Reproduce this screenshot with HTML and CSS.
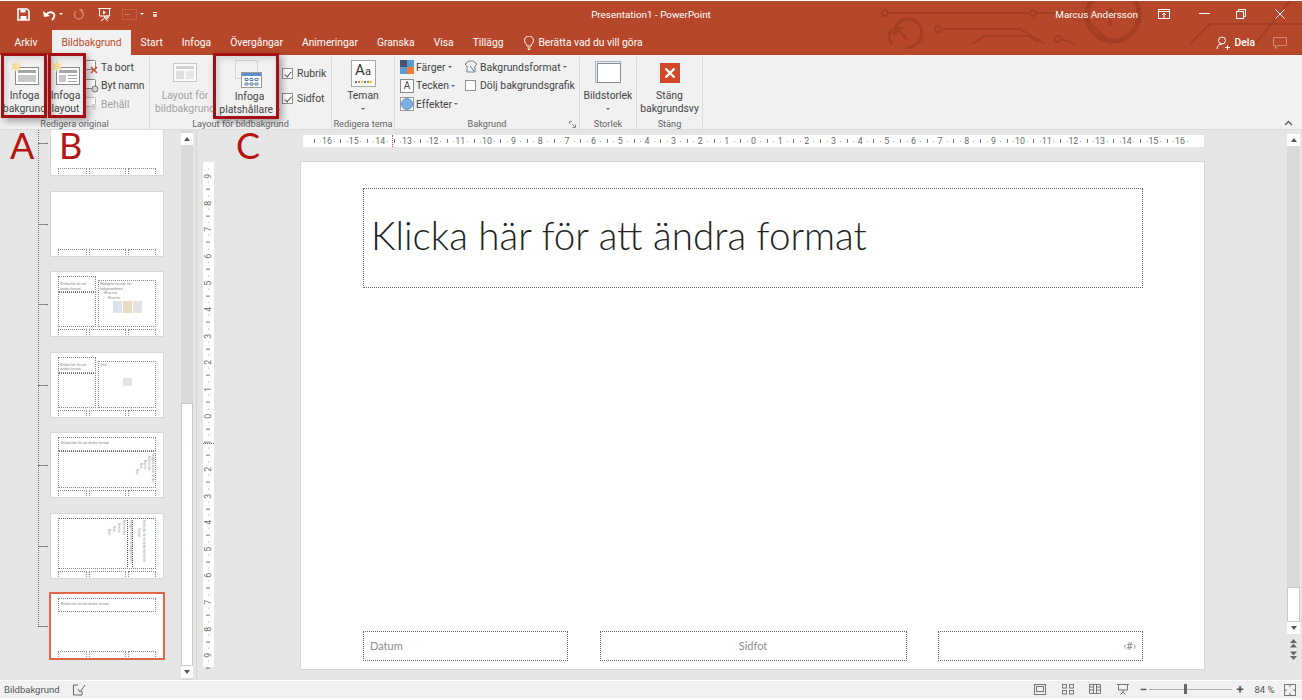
FILE: index.html
```html
<!DOCTYPE html>
<html lang="sv">
<head>
  <meta charset="UTF-8">
  <title>Presentation1 - PowerPoint</title>
  <link rel="stylesheet" href="styles.css">
</head>
<body>
  <div class="chrome">
    <svg class="circuit" width="422" height="54" viewBox="0 0 422 54" fill="none" stroke="#a33d24" stroke-width="2">
      <circle cx="5" cy="12" r="3"/><path d="M8 12H150"/><circle cx="153" cy="12" r="3"/><path d="M156 12H200L232 43"/>
      <circle cx="233" cy="14" r="26" stroke-width="5"/><path d="M222 17l8-9 8 9M230 9v16" stroke-width="3"/>
      <path d="M14 34a14 14 0 1 1 12 12M12 43a14 14 0 0 1-1-15" stroke-width="3"/><path d="M16 27h7M16 27v7M16 27l11 11" stroke-width="3"/>
      <circle cx="58" cy="28" r="3"/><path d="M61 28H140L165 43"/>
      <path d="M92 43L105 35H148L158 41"/><circle cx="178" cy="38" r="3"/><path d="M181 38L195 43"/>
      <path d="M310 43L330 23H422M375 43L410 0"/>
    </svg>

    <!-- Title bar -->
    <header class="titlebar">
      <div class="qat">
        <svg width="13" height="13" viewBox="0 0 13 13"><path d="M1 1h9l2 2v9H1z" fill="none" stroke="#fff" stroke-width="1.6"/><rect x="3.5" y="1.5" width="5" height="3" fill="#fff"/><rect x="3.5" y="8" width="6" height="4" fill="#fff"/></svg>
        <svg class="qat-undo" width="14" height="13" viewBox="0 0 14 13"><path d="M4 8c1-4 6-5 8-2 1 2 0 4-2 6" fill="none" stroke="#fff" stroke-width="1.8"/><path d="M1 3l1 6 6-1z" fill="#fff"/></svg>
        <span class="caret caret-white qat-caret"></span>
        <svg class="qat-redo" width="12" height="13" viewBox="0 0 12 13"><path d="M8 2.500a4.500 4.500 0 1 1-5 .5" fill="none" stroke="#d2836e" stroke-width="1.500"/><path d="M6 1l4 0-1 4z" fill="#d2836e"/></svg>
        <svg class="qat-show" width="15" height="15" viewBox="0 0 15 15" fill="none" stroke="#fff"><path d="M1 1.500h13M2.500 2v7h10V2M7.500 9v2M4 14l3.500-3 3.500 3"/><path d="M6 3.500l3 2-3 2z" fill="#fff" stroke="none"/><circle cx="10" cy="10" r="2" fill="#f0cdc3" stroke="none"/></svg>
        <svg class="qat-touch" width="15" height="11" viewBox="0 0 15 11" fill="none" stroke="#cd7a63"><rect x="0.500" y="0.500" width="14" height="10" stroke-dasharray="1 1"/><path d="M3 5.500h5"/></svg>
        <span class="caret caret-white qat-caret"></span>
        <span class="qat-more"></span>
      </div>
      <div class="doc-title">Presentation1 - PowerPoint</div>
      <div class="window-controls">
        <span class="user-name">Marcus Andersson</span>
        <svg class="ctl-display" width="12" height="10" viewBox="0 0 12 10" fill="none" stroke="#fff"><rect x="0.500" y="0.500" width="11" height="9"/><path d="M0 2.500h12"/><path d="M6 9V4M4 6l2-2 2 2"/></svg>
        <svg class="ctl-min" width="11" height="2" viewBox="0 0 11 2"><rect width="11" height="1" fill="#fff"/></svg>
        <svg class="ctl-restore" width="10" height="10" viewBox="0 0 10 10" fill="none" stroke="#fff"><rect x="0.500" y="2.500" width="7" height="7"/><path d="M2.500 2V0.500h7v7H8"/></svg>
        <svg class="ctl-close" width="10" height="10" viewBox="0 0 10 10" stroke="#fff"><path d="M0.500 0.500l9 9M9.500 0.500l-9 9"/></svg>
      </div>
    </header>

    <!-- Tabs -->
    <nav class="tabs">
      <span class="tab tab-file">Arkiv</span>
      <span class="tab tab-active">Bildbakgrund</span>
      <span class="tab">Start</span>
      <span class="tab">Infoga</span>
      <span class="tab">Övergångar</span>
      <span class="tab">Animeringar</span>
      <span class="tab">Granska</span>
      <span class="tab">Visa</span>
      <span class="tab">Tillägg</span>
      <span class="tab tab-tell">
        <svg width="10" height="14" viewBox="0 0 10 14" fill="none" stroke="#fff"><path d="M3 10c0-2-2.500-3-2.500-5.500a4.500 4.500 0 0 1 9 0C9.500 7 7 8 7 10z"/><path d="M3.500 12h3M4 13.500h2"/></svg>
        Berätta vad du vill göra
      </span>
      <span class="share">
        <svg width="14" height="14" viewBox="0 0 14 14" fill="none" stroke="#fff"><circle cx="6" cy="4.500" r="3.500"/><path d="M1 13c0-3 2-5 5-5M9 11.500h5M11.500 9v5"/></svg>
        Dela
        <svg class="share-comment" width="14" height="12" viewBox="0 0 14 12" fill="none" stroke="#d08a76"><path d="M0.500 0.500h13v8h-9l-2 3v-3h-2z"/></svg>
      </span>
    </nav>
  </div>

  <!-- Ribbon -->
  <section class="ribbon">
    <div class="group group-master">
      <div class="group-body">
        <div class="big-btn btn-bg">
          <svg class="big-icon" width="30" height="26" viewBox="0 0 30 26"><rect x="5.500" y="7.500" width="23" height="17" fill="#fff" stroke="#8a8a8a"/><rect x="8" y="10" width="18" height="3" fill="#a6a6a6"/><rect x="8" y="15" width="18" height="7" fill="#c8c8c8"/><path d="M6 0l1.500 4 4-1-2.500 3.500 2.500 3.500-4-1L6 12 4.500 9l-4 1L3 6.500 .5 3l4 1z" fill="#f6dd9c"/></svg>
          <span>Infoga<br>bakgrund</span>
        </div>
        <div class="big-btn btn-layout">
          <svg class="big-icon" width="30" height="26" viewBox="0 0 30 26"><rect x="5.500" y="7.500" width="23" height="17" fill="#fff" stroke="#8a8a8a"/><rect x="8" y="10" width="18" height="3" fill="#a6a6a6"/><rect x="8" y="15" width="7" height="7" fill="#c8c8c8"/><path d="M17 15.500h9M17 18.500h9M17 21.500h9" stroke="#a6a6a6"/><path d="M6 0l1.500 4 4-1-2.500 3.500 2.500 3.500-4-1L6 12 4.500 9l-4 1L3 6.500 .5 3l4 1z" fill="#f6dd9c"/></svg>
          <span>Infoga<br>layout</span>
        </div>
        <div class="small-col">
          <div class="small-btn"><svg width="14" height="14" viewBox="0 0 14 14"><rect x="0.500" y="0.500" width="10" height="9" rx="1" fill="#fff" stroke="#8a8a8a"/><path d="M6 7l6 6M12 7l-6 6" stroke="#d24726" stroke-width="1.500"/></svg>Ta bort</div>
          <div class="small-btn"><svg width="14" height="14" viewBox="0 0 14 14"><rect x="0.500" y="0.500" width="10" height="9" rx="1" fill="#fff" stroke="#8a8a8a"/><circle cx="10" cy="10" r="3" fill="#d8d8d8" stroke="#777"/></svg>Byt namn</div>
          <div class="small-btn is-disabled"><svg width="14" height="14" viewBox="0 0 14 14"><rect x="0.500" y="0.500" width="10" height="9" rx="1" fill="#fff" stroke="#c0c0c0"/><path d="M7 7h4v6l-2-1-2 1z" fill="#d5d5d5"/></svg>Behåll</div>
        </div>
      </div>
      <div class="group-label">Redigera original</div>
    </div>

    <div class="group group-layout">
      <div class="group-body">
        <div class="big-btn btn-lay-disabled is-disabled">
          <svg class="big-icon" width="24" height="19" viewBox="0 0 24 19"><rect x="0.500" y="0.500" width="23" height="18" fill="#fafafa" stroke="#c6c6c6"/><rect x="3" y="3" width="18" height="3" fill="#d4d4d4"/><rect x="3" y="8" width="8" height="8" fill="#dedede"/><rect x="13" y="8" width="8" height="8" fill="#e6e6e6"/></svg>
          <span>Layout för<br>bildbakgrund</span>
        </div>
        <div class="big-btn btn-place">
          <svg class="big-icon" width="30" height="30" viewBox="0 0 30 30" fill="none"><rect x="0.500" y="0.500" width="22" height="18" stroke="#b5b5b5" stroke-dasharray="1 1"/><rect x="6.500" y="12.500" width="20" height="15" fill="#fff" stroke="#9b9b9b"/><rect x="7" y="13" width="19" height="3" fill="#5b8fd0"/><path d="M10 18.500h3v2h-3zM15 18.500h3v2h-3zM20 18.500h3v2h-3zM10 23h3v2h-3zM15 23h3v2h-3zM20 23h3v2h-3z" stroke="#5b7fae"/></svg>
          <span>Infoga<br>platshållare <i class="caret"></i></span>
        </div>
        <div class="check-col">
          <label class="check-row"><i class="checkbox is-checked"></i>Rubrik</label>
          <label class="check-row"><i class="checkbox is-checked"></i>Sidfot</label>
        </div>
      </div>
      <div class="group-label">Layout för bildbakgrund</div>
    </div>

    <div class="group group-theme">
      <div class="group-body">
        <div class="big-btn btn-theme">
          <div class="theme-icon">
            <span class="theme-aa">A<small>a</small></span>
            <span class="theme-dots"></span>
          </div>
          <span>Teman<br><i class="caret"></i></span>
        </div>
      </div>
      <div class="group-label">Redigera tema</div>
    </div>

    <div class="group group-bg">
      <div class="group-body">
        <div class="small-col bg-col1">
          <div class="small-btn"><svg width="14" height="14" viewBox="0 0 14 14"><rect width="7" height="7" fill="#44546a"/><rect x="7" width="7" height="7" fill="#5b9bd5"/><rect y="7" width="7" height="7" fill="#5b9bd5"/><rect x="7" y="7" width="7" height="7" fill="#ed7d31"/></svg>Färger <i class="caret"></i></div>
          <div class="small-btn"><span class="font-icon">A</span>Tecken <i class="caret"></i></div>
          <div class="small-btn"><svg width="14" height="14" viewBox="0 0 14 14"><rect x="0.500" y="0.500" width="13" height="13" fill="#fff" stroke="#9a9a9a"/><circle cx="7" cy="7" r="5.500" fill="#7fb0e3" stroke="#5b8fd0"/></svg>Effekter <i class="caret"></i></div>
        </div>
        <div class="small-col bg-col2">
          <div class="small-btn"><svg width="14" height="14" viewBox="0 0 14 14" fill="none" stroke="#7f7f7f"><path d="M1 4l4-3h4l4 3-2 2v6H3V6z"/><path d="M6 6l4 5" stroke="#3a7ab8"/></svg>Bakgrundsformat <i class="caret"></i></div>
          <label class="small-btn"><i class="checkbox"></i>Dölj bakgrundsgrafik</label>
        </div>
      </div>
      <div class="group-label">Bakgrund<svg class="launcher" width="7" height="7" viewBox="0 0 7 7" fill="none" stroke="#8a8a8a"><path d="M0.500 3V0.500H3M3 3l3 3M6.500 3.500v3h-3"/></svg></div>
    </div>

    <div class="group group-size">
      <div class="group-body">
        <div class="big-btn btn-size">
          <svg class="big-icon" width="26" height="22" viewBox="0 0 26 22" fill="none"><rect x="0.500" y="0.500" width="25" height="21" fill="#e6edf5" stroke="#a9b7c6"/><rect x="2.500" y="2.500" width="23" height="19" fill="#fff" stroke="#8e8e8e"/></svg>
          <span>Bildstorlek<br><i class="caret"></i></span>
        </div>
      </div>
      <div class="group-label">Storlek</div>
    </div>

    <div class="group group-close">
      <div class="group-body">
        <div class="big-btn btn-close">
          <svg class="big-icon" width="20" height="20" viewBox="0 0 20 20"><rect width="20" height="20" fill="#d24726"/><path d="M5.500 5.500l9 9M14.500 5.500l-9 9" stroke="#fff" stroke-width="2.400"/></svg>
          <span>Stäng<br>bakgrundsvy</span>
        </div>
      </div>
      <div class="group-label">Stäng</div>
    </div>

    <svg class="collapse" width="9" height="6" viewBox="0 0 9 6" fill="none" stroke="#555" stroke-width="1.300"><path d="M1 5l3.500-3.500L8 5"/></svg>
  </section>

  <!-- Annotation marks -->
  <div class="mark mark-a"></div>
  <div class="mark mark-b"></div>
  <div class="mark mark-c"></div>
  <div class="mark-letter letter-a">A</div>
  <div class="mark-letter letter-b">B</div>
  <div class="mark-letter letter-c">C</div>

  <main class="workspace">
    <!-- Thumbnails -->
    <aside class="thumb-panel">
      <div class="tree-line"></div>
      <div class="thumb-list">
        <div class="thumb"><div class="t-main"></div><div class="t-foot"><i></i><i></i><i></i></div></div>
        <div class="thumb"><div class="t-main"></div><div class="t-foot"><i></i><i></i><i></i></div></div>
        <div class="thumb">
          <div class="t-main t-split">
            <div class="t-left"><div class="t-box t-head">Klicka här för att ändra format</div><div class="t-box t-fill"></div></div>
            <div class="t-box t-right">
              <p>Redigera format för bakgrundstext</p>
              <p class="in1">Nivå två</p>
              <p class="in2">Nivå tre</p>
              <div class="t-picons"><b class="c1"></b><b class="c2"></b><b class="c3"></b></div>
            </div>
          </div>
          <div class="t-foot"><i></i><i></i><i></i></div>
        </div>
        <div class="thumb">
          <div class="t-main t-split">
            <div class="t-left"><div class="t-box t-head">Klicka här för att ändra format</div><div class="t-box t-fill"></div></div>
            <div class="t-box t-right"><p>Text</p><div class="t-picons t-one"><b class="c3"></b></div></div>
          </div>
          <div class="t-foot"><i></i><i></i><i></i></div>
        </div>
        <div class="thumb">
          <div class="t-main t-stack">
            <div class="t-box t-title">Klicka här för att ändra format</div>
            <div class="t-box t-vert"><p>Redigera format för text</p><p>Nivå två här</p><p>Nivå tre</p><p>Nivå</p><p>Nivå</p></div>
          </div>
          <div class="t-foot"><i></i><i></i><i></i></div>
        </div>
        <div class="thumb">
          <div class="t-main t-stack">
            <div class="t-box t-vert t-vert-tall"><p>Klicka här för att ändra format här</p><p>Format</p><div class="t-vbox"><p>Redigera format för bakgrundstext</p></div><p>Nivå två här</p><p>Nivå tre</p><p>Nivå</p><p>Nivå</p></div>
          </div>
          <div class="t-foot"><i></i><i></i><i></i></div>
        </div>
        <div class="thumb thumb-active">
          <div class="t-main t-stack"><div class="t-box t-title">Klicka här för att ändra format</div></div>
          <div class="t-foot"><i></i><i></i><i></i></div>
        </div>
      </div>
      <div class="scrollbar scrollbar-left">
        <span class="sb-btn"><i class="arrow-up"></i></span>
        <span class="sb-track"></span>
        <span class="sb-thumb"></span>
        <span class="sb-btn"><i class="arrow-down"></i></span>
      </div>
    </aside>

    <!-- Editor -->
    <section class="editor">
      <div class="editor-main">
        <div class="ruler-h">
          <span>16</span><span>15</span><span>14</span><span>13</span><span>12</span><span>11</span><span>10</span><span>9</span><span>8</span><span>7</span><span>6</span><span>5</span><span>4</span><span>3</span><span>2</span><span>1</span><span>0</span><span>1</span><span>2</span><span>3</span><span>4</span><span>5</span><span>6</span><span>7</span><span>8</span><span>9</span><span>10</span><span>11</span><span>12</span><span>13</span><span>14</span><span>15</span><span>16</span>
          <em class="ruler-cursor"></em>
        </div>
        <div class="editor-row">
          <div class="ruler-v">
            <span>9</span><span>8</span><span>7</span><span>6</span><span>5</span><span>4</span><span>3</span><span>2</span><span>1</span><span>0</span><span>1</span><span>2</span><span>3</span><span>4</span><span>5</span><span>6</span><span>7</span><span>8</span><span>9</span>
            <em class="ruler-cursor-v"></em>
          </div>
          <div class="slide">
            <div class="ph ph-title">Klicka här för att ändra format</div>
            <div class="slide-foot">
              <div class="ph ph-date">Datum</div>
              <div class="ph ph-footer">Sidfot</div>
              <div class="ph ph-num">‹#›</div>
            </div>
          </div>
        </div>
      </div>
      <div class="scrollbar scrollbar-right">
        <span class="sb-btn"><i class="arrow-up"></i></span>
        <span class="sb-track"></span>
        <span class="sb-thumb"></span>
        <span class="sb-btn"><i class="arrow-down"></i></span>
        <svg class="sb-page" width="9" height="9" viewBox="0 0 9 9" fill="#666"><path d="M1 4L4.500 0 8 4zM1 8.500L4.500 4.500 8 8.500z"/></svg>
        <svg class="sb-page" width="9" height="9" viewBox="0 0 9 9" fill="#666"><path d="M1 0.500h7L4.500 4.500zM1 5h7L4.500 9z"/></svg>
      </div>
    </section>
  </main>

  <!-- Status bar -->
  <footer class="statusbar">
    <span>Bildbakgrund</span>
    <svg class="st-check" width="13" height="12" viewBox="0 0 13 12" fill="none" stroke="#666"><path d="M5 1H.500v10H9V7"/><path d="M5 5l2 3 5-7"/></svg>
    <div class="status-right">
      <svg width="12" height="11" viewBox="0 0 12 11" fill="none" stroke="#777"><rect x="0.500" y="0.500" width="11" height="10"/><rect x="2.500" y="2.500" width="7" height="5"/></svg>
      <svg width="12" height="11" viewBox="0 0 12 11" fill="none" stroke="#777"><rect x="0.500" y="0.500" width="4" height="3.500"/><rect x="7.500" y="0.500" width="4" height="3.500"/><rect x="0.500" y="6.500" width="4" height="3.500"/><rect x="7.500" y="6.500" width="4" height="3.500"/></svg>
      <svg width="12" height="11" viewBox="0 0 12 11" fill="none" stroke="#777"><path d="M0.500 0.500h11v9h-11zM4.500 0.500v9M7.500 0.500v9M0.500 3h4M7.500 3h4M0.500 6h4M7.500 6h4"/></svg>
      <svg width="12" height="11" viewBox="0 0 12 11" fill="none" stroke="#777"><path d="M0 0.500h12M1.500 1v5h9V1M6 6v2M3.500 10.500L6 8l2.500 2.500"/></svg>
      <span class="zoom-sign">−</span>
      <span class="zoom-track"><i class="zoom-thumb"></i></span>
      <span class="zoom-sign">+</span>
      <span class="zoom-level">84 %</span>
      <svg width="12" height="12" viewBox="0 0 12 12" fill="none" stroke="#777"><rect x="0.500" y="0.500" width="11" height="11"/><path d="M6 0v3M6 9v3M0 6h3M9 6h3"/></svg>
    </div>
  </footer>
</body>
</html>
```

FILE: styles.css
```css
* {
  box-sizing: border-box;
}

body {
  position: relative;
  display: flex;
  flex-direction: column;
  margin: 0;
  padding-top: 1px;
  width: 1302px;
  height: 700px;
  overflow: hidden;
  background-color: #fff;
  color: #444;
  font-family: Roboto, "Noto Sans", sans-serif;
  font-size: 10px;
}

i, em {
  font-style: normal;
}

.chrome {
  position: relative;
  flex: none;
  background-color: #b7472a;
  color: #fff;
}

.circuit {
  position: absolute;
  top: 0;
  left: 880px;
}

/* title bar */
.titlebar {
  position: relative;
  display: grid;
  grid-template-columns: 1fr auto 1fr;
  align-items: center;
  height: 26px;
}

.qat {
  display: flex;
  align-items: center;
  padding-left: 17px;
}

.qat-undo {
  margin-left: 12px;
}

.qat-caret {
  margin-left: 3px;
}

.qat-redo {
  margin-left: 10px;
}

.qat-show {
  margin-left: 12px;
}

.qat-touch {
  margin-left: 10px;
}

.qat-more {
  margin-left: 9px;
  width: 4px;
  height: 5px;
  border-top: 1px solid #fff;
  border-bottom: 3px solid #eecabf;
}

.doc-title {
  font-size: 9.900px;
}

.window-controls {
  display: flex;
  align-items: center;
  justify-content: flex-end;
}

.user-name {
  font-size: 9.900px;
}

.ctl-display {
  margin-left: 20px;
}

.ctl-min {
  margin-left: 29px;
}

.ctl-restore {
  margin-left: 26px;
}

.ctl-close {
  margin-left: 29px;
  margin-right: 17px;
}

/* tabs */
.tabs {
  position: relative;
  display: flex;
  align-items: flex-end;
  height: 28px;
  padding-left: 5px;
  font-size: 10.300px;
}

.tab {
  display: flex;
  align-items: center;
  height: 25px;
  padding: 0 9.500px;
  white-space: nowrap;
}

.tab-file {
  margin-right: 5px;
}

.tab-active {
  background-color: #f1f1f1;
  color: #c0492b;
}

.tab-tell {
  gap: 4px;
  margin-left: 2px;
}

.share {
  display: flex;
  align-items: center;
  gap: 5px;
  height: 25px;
  margin-left: auto;
  margin-right: 15px;
  font-weight: 500;
}

.share-comment {
  margin-left: 13px;
}

/* ribbon */
.ribbon {
  position: relative;
  display: flex;
  flex: none;
  height: 75px;
  background-color: #f1f1f1;
  border-bottom: 1px solid #dcdcdc;
}

.group {
  display: flex;
  flex-direction: column;
  flex: none;
  height: 72px;
  margin-top: 2px;
  border-right: 1px solid #dadada;
}

.group-body {
  display: flex;
  flex: none;
  height: 61px;
}

.group-label {
  position: relative;
  height: 11px;
  color: #666;
  font-size: 9.200px;
  line-height: 11px;
  text-align: center;
  white-space: nowrap;
}

.launcher {
  position: absolute;
  right: 3px;
  top: 3px;
}

.group-master { width: 150px; }
.group-layout { width: 182px; }
.group-theme { width: 63px; }
.group-bg { width: 185px; }
.group-size { width: 57px; }
.group-close { width: 66px; }

.big-btn {
  display: flex;
  flex-direction: column;
  align-items: center;
  flex: none;
  height: 61px;
  font-size: 10.400px;
  line-height: 13px;
  text-align: center;
  white-space: nowrap;
}

.big-btn > span {
  margin-top: auto;
  margin-bottom: 3px;
}

.big-icon {
  flex: none;
  margin-top: 3px;
}

.btn-bg { width: 45px; margin-left: 2px; }
.btn-layout { width: 37px; }
.btn-lay-disabled { width: 64px; margin-left: 3px; }
.btn-place { width: 65px; }
.btn-theme { width: 62px; }
.btn-size { width: 56px; }
.btn-close { width: 65px; }

.btn-size .big-icon {
  margin-top: 4px;
}

.btn-close .big-icon {
  margin-top: 6px;
}

.btn-lay-disabled .big-icon {
  margin-top: 6px;
}

.is-disabled {
  color: #a3a3a3;
}

.small-col {
  display: flex;
  flex-direction: column;
  margin-left: 1px;
  padding-top: 1px;
}

.small-btn {
  display: flex;
  align-items: center;
  gap: 2px;
  height: 18.500px;
  font-size: 10.400px;
  white-space: nowrap;
}

.bg-col1 {
  width: 59px;
  margin-left: 5px;
}

.bg-col2 {
  margin-left: 5px;
}

.font-icon {
  display: inline-block;
  width: 14px;
  height: 14px;
  border: 1px solid #8a8a8a;
  background-color: #fff;
  font-size: 10px;
  line-height: 12px;
  text-align: center;
}

.check-col {
  display: flex;
  flex-direction: column;
  padding-top: 4px;
}

.check-row {
  display: flex;
  align-items: center;
  gap: 4px;
  height: 25px;
  font-size: 10.400px;
}

.checkbox {
  position: relative;
  display: inline-block;
  flex: none;
  width: 11px;
  height: 11px;
  border: 1px solid #8f8f8f;
  background-color: #fff;
}

.bg-col2 .checkbox {
  margin: 0 2px 0 1px;
}

.is-checked::after {
  content: '';
  position: absolute;
  top: 1px;
  left: 3px;
  width: 3px;
  height: 6px;
  border: solid #555;
  border-width: 0 1px 1px 0;
  transform: rotate(40deg);
}

.caret {
  display: inline-block;
  width: 0;
  height: 0;
  border-left: 2px solid transparent;
  border-right: 2px solid transparent;
  border-top: 2px solid #666;
  vertical-align: middle;
}

.caret-white {
  border-top-color: #fff;
}

.theme-icon {
  display: flex;
  flex-direction: column;
  align-items: center;
  width: 25px;
  height: 27px;
  margin-top: 3px;
  border: 1px solid #a8a8a8;
  background-color: #fff;
}

.theme-aa {
  color: #333;
  font-size: 15px;
  line-height: 19px;
}

.theme-aa small {
  font-size: 11px;
}

.theme-dots {
  width: 17px;
  height: 2px;
  background: repeating-linear-gradient(90deg, #4472c4 0 2px, #fff 2px 3px, #ed7d31 3px 5px, #fff 5px 6px, #ffc000 6px 8px, #fff 8px 9px);
}

.collapse {
  position: absolute;
  right: 9px;
  bottom: 3px;
}

/* red annotation boxes */
.mark {
  position: absolute;
  z-index: 5;
  top: 53px;
  height: 65px;
  border: 3px solid #a50f14;
  box-shadow: 3px 3px 7px rgba(0, 0, 0, 0.35), inset 2px 2px 6px rgba(0, 0, 0, 0.15);
}

.mark-a { left: 1px; width: 46px; }
.mark-b { left: 48px; width: 38px; }
.mark-c { left: 213px; width: 66px; height: 66px; }

.mark-letter {
  position: absolute;
  z-index: 5;
  top: 130px;
  color: #b71414;
  font-family: Lato, sans-serif;
  font-size: 36px;
  line-height: 30px;
}

.letter-a { left: 10px; }
.letter-b { left: 59px; }
.letter-c { left: 236px; }

/* workspace */
.workspace {
  display: flex;
  flex: none;
  height: 550px;
  background-color: #e6e6e6;
}

.thumb-panel {
  position: relative;
  display: flex;
  flex: none;
  width: 197px;
  overflow: hidden;
  border-right: 1px solid #d4d4d4;
}

.tree-line {
  position: absolute;
  top: 0;
  left: 38px;
  height: 497px;
  border-left: 1px dotted #777;
}

.thumb-list {
  display: flex;
  flex-direction: column;
  flex: none;
  gap: 16.500px;
  width: 181px;
  margin-top: -19px;
  padding-left: 51px;
}

.thumb {
  position: relative;
  display: flex;
  flex-direction: column;
  flex: none;
  width: 112px;
  height: 64px;
  padding: 4px 7px 0;
  background-color: #fff;
  box-shadow: 0 0 0 1px #d8d8d8;
}

.thumb::before {
  content: '';
  position: absolute;
  top: 50%;
  left: -13px;
  width: 10px;
  border-top: 1px dashed #777;
}

.thumb-active {
  box-shadow: 0 0 0 2px #e2674a;
}

.t-main {
  flex: 1;
  min-height: 0;
}

.t-foot {
  display: flex;
  flex: none;
  gap: 2px;
  height: 6px;
  margin-top: 2px;
  margin-bottom: 1px;
}

.t-foot i {
  flex: 28;
  border: 1px dotted #8a8a8a;
  border-bottom: 0;
}

.t-foot i:nth-child(2) {
  flex: 37;
}

.t-box {
  border: 1px dotted #888;
  color: #8a8a8a;
  font-size: 3.600px;
  line-height: 4.500px;
}

.t-split {
  display: flex;
  gap: 2px;
}

.t-left {
  display: flex;
  flex-direction: column;
  flex: none;
  width: 38px;
}

.t-head {
  height: 16px;
  padding: 5px 1px 0;
}

.t-fill {
  flex: 1;
  border-top-color: #666;
}

.t-right {
  flex: 1;
  margin-top: 4px;
  padding: 1px;
}

.t-right p {
  margin: 0;
}

.t-right .in1 { margin-left: 4px; }
.t-right .in2 { margin-left: 8px; }

.t-picons {
  display: flex;
  justify-content: center;
  gap: 1px;
  margin-top: 1px;
}

.t-one {
  margin-top: 11px;
}

.t-picons b {
  width: 9px;
  height: 12px;
  background-color: #dbe5ef;
}

.t-one b {
  height: 8px;
}

.t-picons .c2 {
  background-color: #e8dcc0;
}

.t-picons .c3 {
  background-color: #e4e4e4;
}

.t-stack {
  display: flex;
  flex-direction: column;
}

.t-title {
  flex: none;
  height: 14px;
  padding: 3px 2px;
}

/* vertical text in the thumbnails stacks right to left */
.t-vert {
  flex: 1;
  min-height: 0;
  overflow: hidden;
  padding: 1px;
  border-top-color: #666;
  writing-mode: vertical-rl;
  font-size: 2.800px;
  line-height: 3px;
}

.t-vert p {
  margin: 0 0 0 1px;
  white-space: nowrap;
}

.t-vert > p:nth-child(2) { margin-top: 3px; }
.t-vert > p:nth-child(3) { margin-top: 7px; }
.t-vert > p:nth-child(4) { margin-top: 10px; }
.t-vert > p:nth-child(5) { margin-top: 16px; }

.t-vert-tall {
  padding-right: 10px;
}

.t-vert-tall > p:nth-child(n) {
  margin-left: 2px;
}

.t-vert-tall > p:nth-child(2) { margin-top: 8px; margin-left: 4px; }
.t-vert-tall > p:nth-child(4) { margin-top: 0; }
.t-vert-tall > p:nth-child(5) { margin-top: 3px; }
.t-vert-tall > p:nth-child(6) { margin-top: 6px; }
.t-vert-tall > p:nth-child(7) { margin-top: 9px; }

.t-vbox {
  margin-left: 2px;
  border-left: 1px dotted #555;
  border-right: 1px dotted #555;
}

/* scrollbars */
.scrollbar {
  display: flex;
  flex-direction: column;
  flex: none;
  width: 12px;
  background-color: #dadada;
}

.scrollbar-left {
  padding-top: 3px;
  padding-bottom: 2px;
}

.scrollbar-left .sb-thumb { height: 263px; }

.sb-btn {
  display: flex;
  align-items: center;
  justify-content: center;
  flex: none;
  height: 12px;
  background-color: #fff;
}

.sb-track {
  flex: 1;
}

.sb-thumb {
  flex: none;
  background-color: #fff;
  border: 1px solid #c8c8c8;
}

.arrow-up, .arrow-down {
  width: 0;
  height: 0;
  border-left: 3.500px solid transparent;
  border-right: 3.500px solid transparent;
}

.arrow-up {
  border-bottom: 4px solid #555;
}

.arrow-down {
  border-top: 4px solid #555;
}

.editor {
  display: flex;
  flex: 1;
  min-width: 0;
}

.editor-main {
  flex: none;
  width: 1090px;
}

.ruler-h {
  position: relative;
  display: flex;
  width: 901px;
  height: 12px;
  margin: 5px 0 0 106px;
  padding-left: 10.670px;
  background-color: #fff;
  color: #6a6a6a;
  font-size: 8.800px;
  line-height: 12px;
}

.ruler-h span {
  flex: none;
  width: 26.660px;
  text-align: center;
  background-image:
    linear-gradient(#777, #777),
    linear-gradient(#aaa, #aaa),
    linear-gradient(#aaa, #aaa);
  background-repeat: no-repeat;
  background-size: 1px 4px, 1px 1px, 1px 1px;
  background-position: 0 4px, 6.500px 6px, 20px 6px;
}

.ruler-cursor {
  position: absolute;
  top: 0;
  left: 89px;
  height: 12px;
  border-left: 1px dotted #c0504d;
}

.editor-row {
  display: flex;
  margin-top: 15px;
}

.ruler-v {
  position: relative;
  display: flex;
  flex-direction: column;
  flex: none;
  width: 11px;
  height: 505px;
  margin-left: 6px;
  padding-top: 1px;
  background-color: #fff;
  color: #6a6a6a;
  font-size: 8.800px;
}

.ruler-v span {
  flex: none;
  height: 26.630px;
  line-height: 11px;
  text-align: center;
  writing-mode: vertical-rl;
  transform: rotate(180deg);
  background-image:
    linear-gradient(#777, #777),
    linear-gradient(#aaa, #aaa),
    linear-gradient(#aaa, #aaa);
  background-repeat: no-repeat;
  background-size: 4px 1px, 1px 1px, 1px 1px;
  background-position: 4px 0, 5px 6.500px, 5px 20px;
}

.ruler-cursor-v {
  position: absolute;
  top: 281px;
  left: 0;
  width: 11px;
  border-top: 1px dotted #c0504d;
}

.slide {
  display: flex;
  flex-direction: column;
  justify-content: space-between;
  flex: none;
  width: 903px;
  height: 507px;
  margin-left: 87px;
  padding: 26px 61px 8px 62px;
  background-color: #fff;
  box-shadow: 0 0 0 1px #d6d6d6;
}

.ph {
  border: 1px dotted #666;
  color: #8c8c8c;
  font-family: Lato, sans-serif;
}

.ph-title {
  height: 100px;
  padding: 20px 7px 0;
  color: #222;
  font-size: 38.600px;
  font-weight: 300;
  line-height: 52px;
  white-space: nowrap;
}

.slide-foot {
  display: flex;
  justify-content: space-between;
}

.slide-foot .ph {
  height: 30px;
  padding: 0 6px;
  font-size: 11px;
  line-height: 27px;
}

.ph-date { width: 205px; }
.ph-footer { width: 307px; text-align: center; }
.ph-num { width: 205px; text-align: right; }

.scrollbar-right {
  width: 13px;
  height: 505px;
  margin: 4px 0 0 0;
  background: linear-gradient(#dadada 0 492px, transparent 492px);
  align-items: center;
}

.scrollbar-right .sb-btn,
.scrollbar-right .sb-thumb {
  width: 13px;
}

.scrollbar-right .sb-track {
  flex: none;
  height: 441px;
}

.scrollbar-right .sb-thumb {
  height: 35px;
}

.sb-page {
  flex: none;
  margin-top: 3px;
}

.sb-page:nth-of-type(1) {
  margin-top: 5px;
}

/* status bar */
.statusbar {
  display: flex;
  align-items: center;
  flex: none;
  height: 17px;
  margin-top: 1px;
  padding-left: 4px;
  background-color: #f1f1f1;
  color: #555;
  font-size: 9.500px;
}

.st-check {
  margin-left: 13px;
}

.status-right {
  display: flex;
  align-items: center;
  gap: 15.500px;
  margin-left: auto;
  padding-right: 6px;
}

.zoom-sign {
  margin-left: -4.500px;
  color: #555;
  font-size: 13px;
  font-weight: 700;
  line-height: 12px;
}

.zoom-track {
  position: relative;
  width: 83px;
  height: 1px;
  margin: 0 -6.500px 0 -13.500px;
  background-color: #b0b0b0;
}

.zoom-thumb {
  position: absolute;
  top: -5px;
  left: 35px;
  width: 3px;
  height: 10px;
  background-color: #666;
}

.zoom-level {
  margin: 0 -6px 0 -4.500px;
}
```
